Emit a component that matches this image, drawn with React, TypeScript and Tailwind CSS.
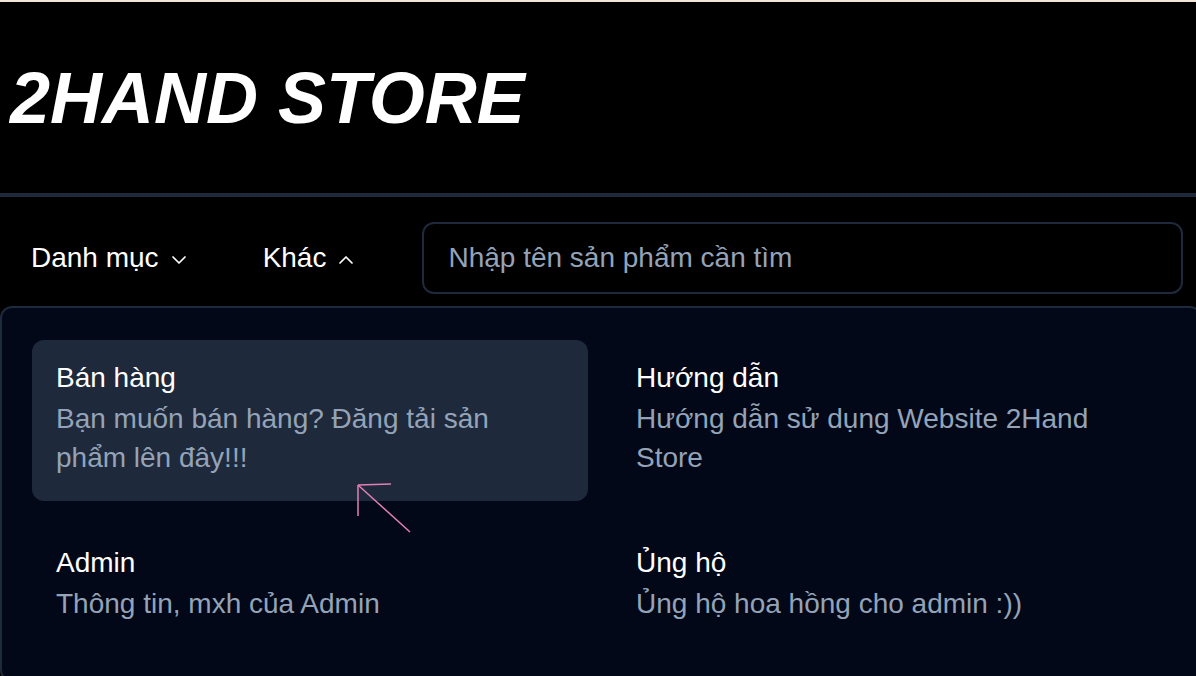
import React from 'react';
import { ChevronDown, ChevronUp } from 'lucide-react';

const items = [
  { title: 'Bán hàng', desc: 'Bạn muốn bán hàng? Đăng tải sản phẩm lên đây!!!', active: true },
  { title: 'Hướng dẫn', desc: 'Hướng dẫn sử dụng Website 2Hand Store' },
  { title: 'Admin', desc: 'Thông tin, mxh của Admin' },
  { title: 'Ủng hộ', desc: 'Ủng hộ hoa hồng cho admin :))' },
];

const App = () => {
  return (
    <div className="relative w-[1196px] h-[676px] overflow-hidden bg-black font-['Liberation_Sans',Arial,sans-serif]">
      {/* top strip */}
      <div className="h-[2px] bg-[#f3e5d6]" />

      {/* Header */}
      <header className="h-[195px] flex items-center pl-[10px] border-b-4 border-[#1e293b]">
        <h1 className="text-[72px] font-bold italic text-white leading-none">2HAND STORE</h1>
      </header>

      {/* Nav row */}
      <div className="flex items-center h-[80px] mt-[21px]">
        <button className="flex items-center h-[80px] pl-[31px] pr-[32px] text-[28px] text-white">
          Danh mục
          <ChevronDown size={24} strokeWidth={1.75} className="ml-[8px] relative top-[2px]" />
        </button>
        <button className="flex items-center h-[80px] px-[32px] ml-[8px] text-[28px] text-white">
          Khác
          <ChevronUp size={24} strokeWidth={1.75} className="ml-[8px] relative top-[2px]" />
        </button>
        <div className="flex-1 ml-[32px] mr-[13px]">
          <input
            placeholder="Nhập tên sản phẩm cần tìm"
            className="w-full h-[72px] rounded-[12px] border-2 border-[#1e293b] bg-black px-[24px] text-[28px] text-white placeholder:text-[#94a3b8] outline-none"
          />
        </div>
      </div>

      {/* Dropdown panel */}
      <div className="mt-[8px] w-[1202px] rounded-[12px] border-2 border-[#1e293b] bg-[#020817] pl-[30px] pr-[32px] pt-[32px] pb-[32px]">
        <div className="grid grid-cols-2 gap-[24px]">
          {items.map((it) => (
            <div
              key={it.title}
              className={`rounded-[12px] p-[24px] ${it.active ? 'bg-[#1e293b]' : ''}`}
            >
              <div className="text-[28px] leading-none text-white">{it.title}</div>
              <p className="mt-[8px] text-[28px] leading-[38.5px] text-[#94a3b8]">{it.desc}</p>
            </div>
          ))}
        </div>
      </div>

      {/* annotation arrow */}
      <svg className="absolute left-0 top-0 pointer-events-none" width="1196" height="676">
        <g stroke="#e27fb8" strokeWidth="1.5" fill="none">
          <line x1="358" y1="485" x2="410" y2="532" />
          <line x1="358" y1="485" x2="391" y2="484" />
          <line x1="358" y1="485" x2="358" y2="516" />
        </g>
      </svg>
    </div>
  );
};

export default App;
